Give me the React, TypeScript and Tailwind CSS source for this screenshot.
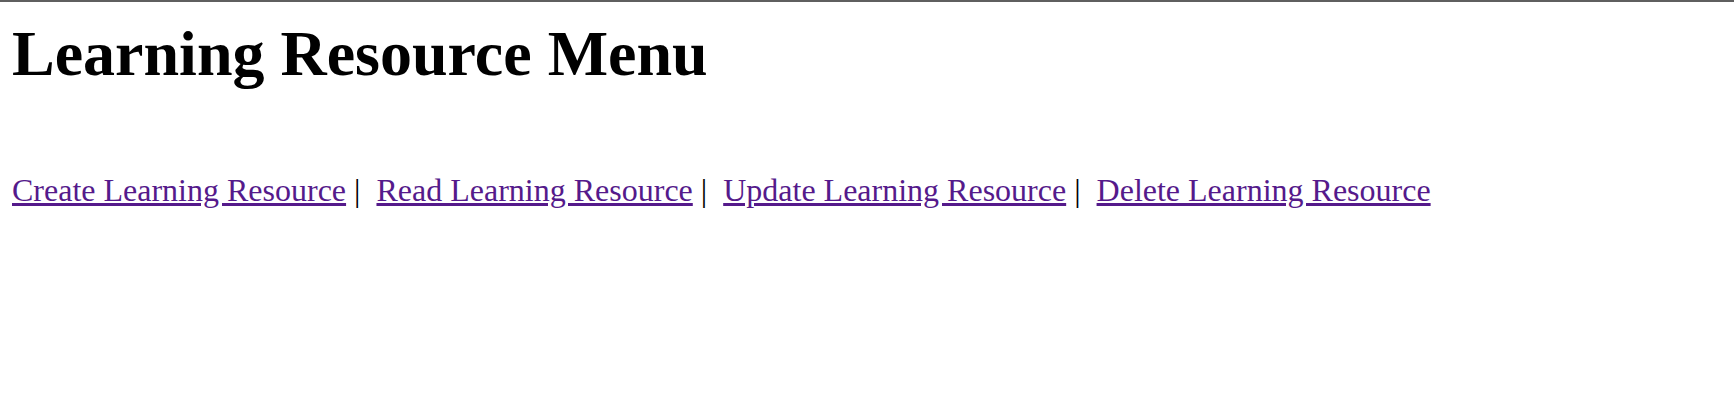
import React from "react";

const links = [
  "Create Learning Resource",
  "Read Learning Resource",
  "Update Learning Resource",
  "Delete Learning Resource",
];

export default function App() {
  return (
    <div
      className="min-h-[402px] w-full bg-white border-t-2 border-[#5f5f5f] text-black"
      style={{ fontFamily: '"Liberation Serif", "Times New Roman", serif' }}
    >
      <div className="px-[12px] pt-[20px]">
        <h1 className="text-[64px] leading-[64px] font-bold">Learning Resource Menu</h1>
        <p className="mt-[88px] text-[32px] leading-[32px] whitespace-pre">
          {links.map((l, i) => (
            <React.Fragment key={l}>
              <a href="#" className="text-[#551a8b] underline">
                {l}
              </a>
              {i < links.length - 1 ? " |\u00a0 " : ""}
            </React.Fragment>
          ))}
        </p>
      </div>
    </div>
  );
}
